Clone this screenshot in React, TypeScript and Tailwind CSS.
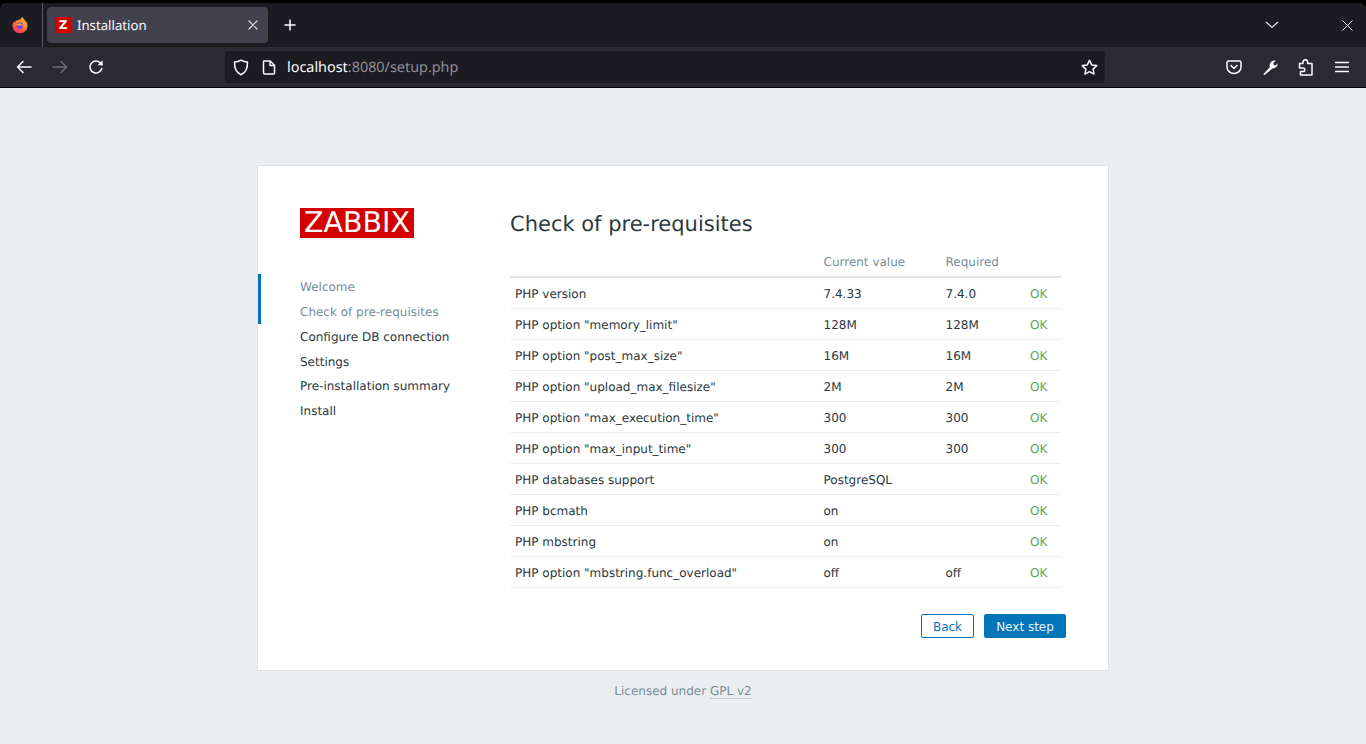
import React from "react";

const rows: [string, string, string][] = [
  ["PHP version", "7.4.33", "7.4.0"],
  ['PHP option "memory_limit"', "128M", "128M"],
  ['PHP option "post_max_size"', "16M", "16M"],
  ['PHP option "upload_max_filesize"', "2M", "2M"],
  ['PHP option "max_execution_time"', "300", "300"],
  ['PHP option "max_input_time"', "300", "300"],
  ["PHP databases support", "PostgreSQL", ""],
  ["PHP bcmath", "on", ""],
  ["PHP mbstring", "on", ""],
  ['PHP option "mbstring.func_overload"', "off", "off"],
];

const steps = ["Welcome", "Check of pre-requisites", "Configure DB connection", "Settings", "Pre-installation summary", "Install"];

const stroke = { fill: "none", stroke: "currentColor", strokeWidth: 1.5, strokeLinecap: "round" as const, strokeLinejoin: "round" as const };

function FirefoxLogo() {
  return (
    <svg width="16" height="18" viewBox="0 0 16 18" className="shrink-0">
      <defs>
        <linearGradient id="ff" x1="0.8" y1="0" x2="0.25" y2="1">
          <stop offset="0" stopColor="#ffc62e" />
          <stop offset="0.55" stopColor="#ff7a2e" />
          <stop offset="1" stopColor="#f0246e" />
        </linearGradient>
      </defs>
      <path d="M10 0.5c0.6 1.5 2 2.2 2.6 3.6 1.7 1.4 2.9 3.3 2.9 5.7 0 4.2-3.3 7.5-7.5 7.5S0.5 14 0.5 9.8c0-1.9 0.6-3.4 1.6-4.6 0.1 0.9 0.4 1.3 0.8 1.5 0.4-1.7 1.7-2.6 3.6-2.8 1.7-0.3 3.3-1.2 3.5-3.4z" fill="url(#ff)" />
      <circle cx="8" cy="9.800" r="3.300" fill="#7542e5" />
      <path d="M4.500 8.200c1.600-0.800 3.200-1 4.600-0.400 1.200 0.500 2.200 1.500 2.400 3-1.400-1.400-2.800-1.700-4.500-1.200-1 0.200-1.900-0.300-2.500-1.400z" fill="#ffa436" />
    </svg>
  );
}

function App() {
  return (
    <div className="flex h-[744px] w-[1366px] flex-col overflow-hidden bg-[#ebeef0] font-['DejaVu_Sans',sans-serif] text-xs text-[#2b3840] [text-rendering:geometricPrecision]">
      <header className="shrink-0 bg-black pt-[3px] font-['Noto_Sans',sans-serif] text-[#fbfbfe]">
        <div className="flex h-[44px] items-center rounded-t-[6px] bg-[#1c1b22]">
          <div className="flex h-[44px] w-[43px] items-center justify-center border-r border-[#5b5b62] pr-[2px]">
            <FirefoxLogo />
          </div>
          <div className="ml-[4px] flex h-[36px] w-[221px] items-center rounded-[4px] bg-[#42414d] pl-[8px] pr-[10px]">
            <span className="flex h-[16px] w-[16px] items-center justify-center bg-[#d40000] font-['DejaVu_Sans',sans-serif] text-[12px] font-bold text-white">Z</span>
            <span className="ml-[6px] flex-1 pt-[2px] text-[13.2px]">Installation</span>
            <svg width="10" height="10" viewBox="0 0 10 10" className="text-[#e0e0e6]"><path d="M1 1l8 8M9 1l-8 8" stroke="currentColor" strokeWidth="1.2" strokeLinecap="round" /></svg>
          </div>
          <svg width="12" height="12" viewBox="0 0 12 12" className="ml-[16px]"><path d="M6 0.500v11M0.500 6h11" stroke="currentColor" strokeWidth="1.500" /></svg>
          <div className="flex-1" />
          <svg width="14" height="8" viewBox="0 0 14 8" className="mr-[63px] text-[#e8e8ec]"><path d="M1 1l6 5.500L13 1" fill="none" stroke="currentColor" strokeWidth="1.200" /></svg>
          <svg width="11" height="11" viewBox="0 0 11 11" className="mr-[13px] text-[#f0f0f4]"><path d="M0.500 0.500l10 10M10.500 0.500l-10 10" stroke="currentColor" strokeWidth="1" /></svg>
        </div>
        <div className="box-content flex h-[40px] items-center border-b border-black bg-[#2b2a33]">
          <svg width="16" height="16" viewBox="0 0 16 16" className="ml-[16px]"><path d="M15 8H1.500M7 2.500L1.500 8 7 13.500" {...stroke} /></svg>
          <svg width="16" height="16" viewBox="0 0 16 16" className="ml-[20px] text-[#6f6e76]"><path d="M1 8h13.500M9 2.500L14.500 8 9 13.500" {...stroke} /></svg>
          <svg width="16" height="16" viewBox="0 0 16 16" className="ml-[20px]"><path d="M13.800 9.500A6 6 0 1 1 12 3.600L14.200 5.600" {...stroke} /><path d="M14.600 1.200v5h-5z" fill="currentColor" /></svg>
          <div className="ml-[121px] flex h-[32px] w-[880px] items-center rounded-[4px] bg-[#1c1b22]">
            <svg width="16" height="17" viewBox="0 0 16 17" className="ml-[8px]"><path d="M8 1.200c2 1.200 4.300 1.800 6.500 1.900 0.200 6.200-1.600 10.600-6.500 12.700C3.100 13.700 1.300 9.300 1.500 3.100 3.700 3 6 2.400 8 1.200z" {...stroke} /></svg>
            <svg width="14" height="15" viewBox="0 0 14 15" className="ml-[13px]"><path d="M2 1h6.200L12.500 5.200V13a1 1 0 0 1-1 1H2.500a1 1 0 0 1-1-1V1.500A.5.5 0 0 1 2 1zM8 1v4.500h4.500" {...stroke} /></svg>
            <span className="ml-[11px] pt-[2px] text-[14.4px]">localhost<span className="text-[#8f8f96]">:8080/setup.php</span></span>
            <div className="flex-1" />
            <svg width="17" height="17" viewBox="0 0 17 17" className="mr-[7px]"><path d="M8.500 1.300l2.200 4.600 5 .7-3.600 3.500.9 5-4.500-2.400-4.500 2.400.9-5L1.300 6.600l5-.7z" {...stroke} /></svg>
          </div>
          <div className="flex-1" />
          <svg width="16" height="16" viewBox="0 0 16 16" className="mr-[20px]"><path d="M2.500 2h11A1.500 1.500 0 0 1 15 3.500V8a7 6.500 0 0 1-14 0V3.500A1.500 1.500 0 0 1 2.500 2z" {...stroke} /><path d="M5 6.500L8 9.500l3-3" {...stroke} /></svg>
          <svg width="16" height="16" viewBox="0 0 16 16" className="mr-[20px]"><path d="M1.500 15L7.800 8.200C7 5.500 8.500 2 12 1.500c.8-.1 1.500 0 1.800.1L11.300 4.200l.5 1.800 1.800.5 2-2.200c.3 3-1.800 5.400-5.200 5.200L3.300 15.500c-.7.500-2.500.300-1.800-.5z" fill="currentColor" /></svg>
          <svg width="16" height="17" viewBox="0 0 16 17" className="mr-[21px]"><path d="M1.500 4.500H5V3a2.300 2.300 0 0 1 4.600 0v1.500H14V16H2.500V12.500H5a1.800 1.800 0 0 0 0-3.600H1.500z" {...stroke} /></svg>
          <svg width="14" height="12" viewBox="0 0 14 12" className="mr-[17px]"><path d="M0.500 1.500h13M0.500 6h13M0.500 10.500h13" stroke="currentColor" strokeWidth="1.500" strokeLinecap="round" /></svg>
        </div>
      </header>

      <main className="flex flex-1 flex-col items-center pt-[77px]">
        <section className="flex h-[506px] w-[852px] border border-[#dfe4e7] bg-white">
          <aside className="relative w-[252px] shrink-0 pl-[42px] pt-[42px]">
            <div className="flex h-[30px] w-[114px] items-center justify-center bg-[#d40000] text-[28.5px] leading-none text-white">ZABBIX</div>
            <ol className="mt-[37.2px] leading-[24.8px]">
              {steps.map((s, i) => (
                <li key={s} className={i < 2 ? "h-[24.8px] text-[#768d99]" : "h-[24.8px]"}>{s}</li>
              ))}
            </ol>
            <div className="absolute left-0 top-[108px] h-[50px] w-[3px] bg-[#0275b8]" />
          </aside>
          <div className="flex-1 pt-[42px]">
            <h1 className="text-[21px] leading-[32px]">Check of pre-requisites</h1>
            <div className="mt-[12px] w-[551px]">
              <div className="grid h-[26px] grid-cols-[308.5px_122px_84.5px_36px] items-center border-b-2 border-[#dfe4e7] pb-[4px] text-[#768d99]">
                <span />
                <span className="pl-[5px]">Current value</span>
                <span className="pl-[5px]">Required</span>
                <span />
              </div>
              {rows.map(([n, c, r]) => (
                <div key={n} className="grid h-[31px] grid-cols-[308.5px_122px_84.5px_36px] items-center border-b border-[#ebeef0] pt-[2px]">
                  <span className="pl-[5px]">{n}</span>
                  <span className="pl-[5px]">{c}</span>
                  <span className="pl-[5px]">{r}</span>
                  <span className="pl-[5px] text-[#59a85c]">OK</span>
                </div>
              ))}
            </div>
            <div className="mt-[26px] flex w-[556px] justify-end gap-[10px]">
              <button className="h-[24px] w-[53px] rounded-[2px] border border-[#0275b8] bg-white pt-[1px] text-[#0275b8]">Back</button>
              <button className="h-[24px] w-[82px] rounded-[2px] bg-[#0275b8] pt-[2px] text-[#e6f1f8]">Next step</button>
            </div>
          </div>
        </section>
        <footer className="mt-[12px] text-[#768d99]">
          Licensed under <a className="border-b border-[#c5ced3]">GPL v2</a>
        </footer>
      </main>
    </div>
  );
}

export default App;
